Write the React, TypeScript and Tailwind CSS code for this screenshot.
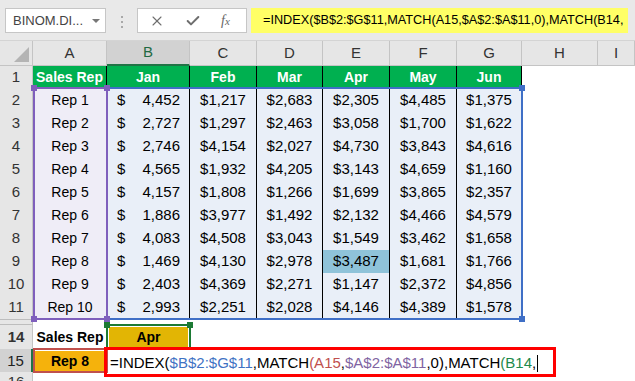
import { X, Check } from 'lucide-react';

const FONT = "font-['Liberation_Sans',Arial,sans-serif]";
const COLS = 'grid grid-cols-[33px_74px_83px_67px_66px_67px_67px_65px_76px_1fr]';

type Rep = { name: string; jan: string; rest: string[] };

const REPS: Rep[] = [
  { name: 'Rep 1', jan: '4,452', rest: ['$1,217', '$2,683', '$2,305', '$4,485', '$1,375'] },
  { name: 'Rep 2', jan: '2,727', rest: ['$1,297', '$2,463', '$3,058', '$1,700', '$1,622'] },
  { name: 'Rep 3', jan: '2,746', rest: ['$4,154', '$2,027', '$4,730', '$3,843', '$4,616'] },
  { name: 'Rep 4', jan: '4,565', rest: ['$1,932', '$4,205', '$3,143', '$4,659', '$1,160'] },
  { name: 'Rep 5', jan: '4,157', rest: ['$1,808', '$1,266', '$1,699', '$3,865', '$2,357'] },
  { name: 'Rep 6', jan: '1,886', rest: ['$3,977', '$1,492', '$2,132', '$4,466', '$4,579'] },
  { name: 'Rep 7', jan: '4,083', rest: ['$4,508', '$3,043', '$1,549', '$3,462', '$1,658'] },
  { name: 'Rep 8', jan: '1,469', rest: ['$4,130', '$2,978', '$3,487', '$1,681', '$1,766'] },
  { name: 'Rep 9', jan: '2,403', rest: ['$4,369', '$2,271', '$1,147', '$2,372', '$4,856'] },
  { name: 'Rep 10', jan: '2,993', rest: ['$2,251', '$2,028', '$4,146', '$4,389', '$1,578'] },
];

const MONTHS = ['Jan', 'Feb', 'Mar', 'Apr', 'May', 'Jun'];
const LETTERS = ['A', 'B', 'C', 'D', 'E', 'F', 'G', 'H', 'I'];

function RowHead({ n, active = false }: { n: string; active?: boolean }) {
  return (
    <div
      className={`flex items-center justify-center border-b border-[#d6d6d6] text-[15px] ${
        active
          ? 'border-r-2 border-r-[#217346] bg-[#d2d2d2] text-[#222]'
          : 'border-r border-r-[#c4c4c4] bg-[#e6e6e6] text-[#333]'
      }`}
    >
      {n}
    </div>
  );
}

/** Coloured range outline Excel draws while a formula is being edited. */
function RefBox({
  left,
  top,
  width,
  height,
  color,
  corners,
}: {
  left: number;
  top: number;
  width: number;
  height: number;
  color: string;
  corners: ('tl' | 'tr' | 'bl' | 'br')[];
}) {
  const pos: Record<string, React.CSSProperties> = {
    tl: { left: -4, top: -4 },
    tr: { right: -4, top: -4 },
    bl: { left: -4, bottom: -4 },
    br: { right: -4, bottom: -4 },
  };
  return (
    <div
      className="pointer-events-none absolute border-2"
      style={{ left, top, width, height, borderColor: color }}
    >
      {corners.map((c) => (
        <span
          key={c}
          className="absolute h-[6px] w-[6px]"
          style={{ ...pos[c], backgroundColor: color }}
        />
      ))}
    </div>
  );
}

export default function App() {
  return (
    <div className={`relative h-[381px] w-[635px] overflow-hidden bg-white ${FONT}`}>
      {/* formula bar */}
      <div className="flex h-[41px] items-start border-b border-[#d4d4d4] bg-[#e9e9e9] pt-[8px]">
        <div className="ml-[5px] flex h-[25px] w-[101px] items-center justify-between border border-[#c6c6c6] bg-white pl-[7px] pr-[5px]">
          <span className="text-[13px] text-[#444]">BINOM.DI...</span>
          <span className="h-0 w-0 border-x-[4px] border-t-[4px] border-x-transparent border-t-[#777]" />
        </div>
        <div className="flex w-[31px] flex-col items-center gap-[3px] pt-[8px]">
          <span className="h-[2px] w-[2px] bg-[#a8a8a8]" />
          <span className="h-[2px] w-[2px] bg-[#a8a8a8]" />
          <span className="h-[2px] w-[2px] bg-[#a8a8a8]" />
        </div>
        <div className="flex h-[25px] w-[110px] items-center border border-[#c6c6c6] bg-white">
          <X className="ml-[11px] h-[16px] w-[16px] text-[#6e6e6e]" strokeWidth={1.6} />
          <Check className="ml-[20px] h-[16px] w-[16px] text-[#6e6e6e]" strokeWidth={3} />
          <span className="ml-[20px] font-['Liberation_Serif',serif] text-[14px] italic text-[#666]">
            f<span className="text-[11px]">x</span>
          </span>
        </div>
        <div className="ml-[4px] flex h-[25px] w-[377px] items-center bg-[#ffff66] pl-[12px]">
          <span className="whitespace-nowrap text-[12.7px] text-black">
            =INDEX($B$2:$G$11,MATCH(A15,$A$2:$A$11,0),MATCH(B14,
          </span>
        </div>
      </div>

      {/* column letters */}
      <div className={`${COLS} h-[25px] bg-[#e6e6e6]`}>
        <div className="relative border-b border-r border-[#c4c4c4]">
          <svg className="absolute bottom-[3px] right-[3px]" width="15" height="15">
            <polygon points="15,0 15,15 0,15" fill="#b4b4b4" />
          </svg>
        </div>
        {LETTERS.map((l) => (
          <div
            key={l}
            className={`flex items-center justify-center border-r border-[#c4c4c4] text-[15px] ${
              l === 'B'
                ? 'border-b-2 border-b-[#217346] bg-[#d2d2d2] text-[#1f6a43]'
                : 'border-b border-b-[#c4c4c4] text-[#333]'
            }`}
          >
            {l}
          </div>
        ))}
      </div>

      {/* row 1 */}
      <div className={`${COLS} h-[23px]`}>
        <RowHead n="1" />
        {['Sales Rep', ...MONTHS].map((h) => (
          <div
            key={h}
            className="flex items-center justify-center border-r border-black bg-[#00b050] text-[14px] font-bold text-white"
          >
            {h}
          </div>
        ))}
        <div />
        <div />
      </div>

      {/* rows 2-11 */}
      {REPS.map((r, i) => (
        <div key={r.name} className={`${COLS} h-[23px] text-[15px] text-black`}>
          <RowHead n={String(i + 2)} />
          <div className="flex items-center justify-center border-b border-black bg-[#efedf7] text-[14px]">
            {r.name}
          </div>
          <div className="flex items-center justify-between border-b border-r border-black bg-[#e9eff8] pl-[10px] pr-[9px]">
            <span>$</span>
            <span>{r.jan}</span>
          </div>
          {r.rest.map((v, j) => (
            <div
              key={j}
              className={`flex items-center justify-center border-b border-r border-black ${
                i === 7 && j === 2 ? 'bg-[#8fc3d9]' : 'bg-[#e9eff8]'
              }`}
            >
              {v}
            </div>
          ))}
          <div />
          <div />
        </div>
      ))}

      {/* hidden rows 12-13 */}
      <div className={`${COLS} h-[6px]`}>
        <div className="border-y border-r border-[#bdbdbd] bg-[#e6e6e6]" />
      </div>

      {/* row 14 */}
      <div className={`${COLS} h-[24px] text-[14px] font-bold text-black`}>
        <RowHead n="14" />
        <div className="flex items-center justify-center whitespace-nowrap">Sales Rep</div>
        <div className="m-[2px] flex items-center justify-center bg-[#e2b504]">Apr</div>
      </div>

      {/* row 15 */}
      <div className={`${COLS} h-[23px] text-black`}>
        <RowHead n="15" active />
        <div className="m-[2px] flex items-center justify-center bg-[#f5b20c] text-[14px] font-bold">
          Rep 8
        </div>
        <div className="col-span-8 flex items-center whitespace-nowrap pl-[3px] pt-[3px] text-[15px]">
          <span>=INDEX(</span>
          <span className="text-[#3f72c4]">$B$2:$G$11</span>
          <span>,MATCH</span>
          <span className="text-[#c0504d]">(A15</span>
          <span>,</span>
          <span className="text-[#8064a2]">$A$2:$A$11</span>
          <span>,0),MATCH</span>
          <span className="text-[#1e8a4c]">(B14</span>
          <span>,</span>
          <span className="ml-[1px] h-[17px] w-px bg-black" />
        </div>
      </div>

      {/* row 16, cut by the window edge */}
      <div className={`${COLS} h-[12px]`}>
        <div className="flex justify-center overflow-hidden border-r border-[#c4c4c4] bg-[#e6e6e6] pt-[2px] text-[15px] leading-none text-[#333]">
          16
        </div>
      </div>

      {/* reference outlines */}
      <RefBox left={106} top={87} width={417} height={233} color="#3f6fc6" corners={['tr', 'br']} />
      <RefBox left={33} top={87} width={75} height={233} color="#7f5fbc" corners={['tl', 'tr', 'bl', 'br']} />
      <RefBox left={106} top={324} width={85} height={26} color="#1c7a34" corners={['tl', 'tr']} />
      <RefBox left={33} top={348} width={75} height={25} color="#c0504d" corners={[]} />

      {/* callout around the formula being typed */}
      <div className="pointer-events-none absolute left-[104px] top-[347px] h-[30px] w-[452px] border-[3px] border-[#ff0000]" />
    </div>
  );
}
